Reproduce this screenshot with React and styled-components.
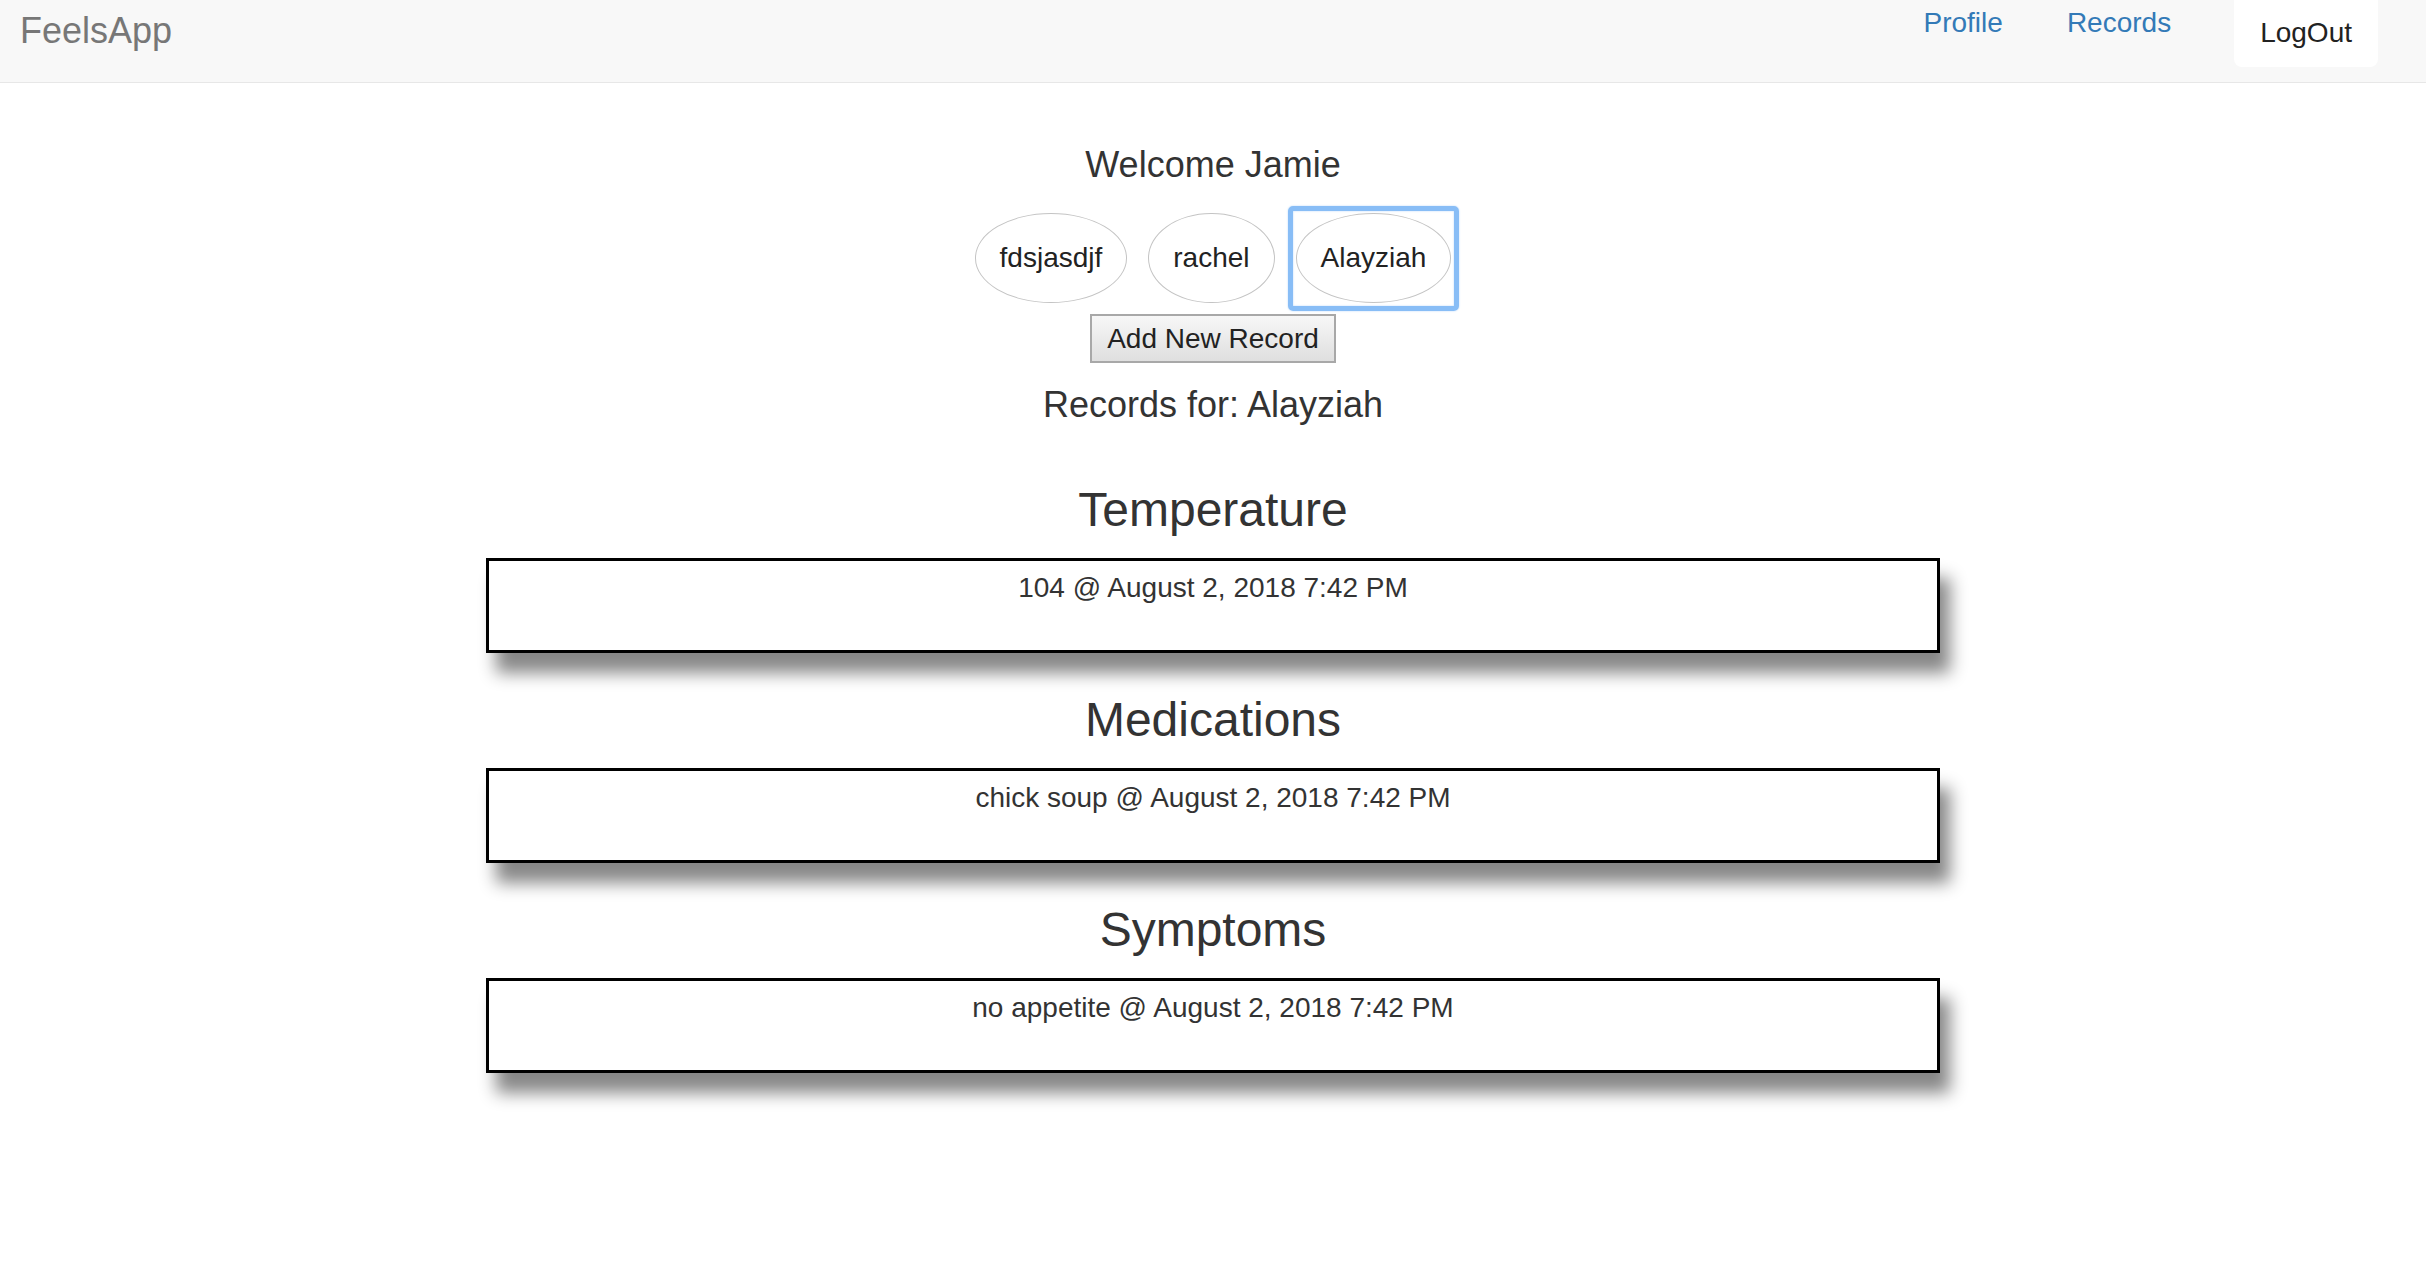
import React, { useState } from 'react';
import styled, { createGlobalStyle } from 'styled-components';

const GlobalStyle = createGlobalStyle`
  html, body {
    margin: 0;
    padding: 0;
    background: #ffffff;
  }
  body {
    font-family: 'Liberation Sans', Helvetica, Arial, sans-serif;
    font-size: 28px;
    line-height: 1.42857;
    color: #333333;
  }
  * {
    box-sizing: border-box;
  }
`;

const Navbar = styled.nav`
  display: flex;
  align-items: flex-start;
  height: 83px;
  background-color: #f8f8f8;
  border-bottom: 1px solid #e7e7e7;
`;

const Brand = styled.a`
  padding: 11px 0 0 20px;
  font-size: 36px;
  line-height: 40px;
  color: #777777;
  text-decoration: none;
`;

const NavLinks = styled.div`
  display: flex;
  align-items: flex-start;
  margin-left: auto;
  margin-right: 48px;
`;

const NavLink = styled.a`
  padding: 3px 32px 0;
  font-size: 28px;
  line-height: 40px;
  color: #337ab7;
  text-decoration: none;
  cursor: pointer;
`;

const LogOut = styled.a`
  margin-left: 31px;
  height: 67px;
  padding: 13px 26px 0;
  background: #ffffff;
  border-radius: 0 0 8px 8px;
  font-size: 28px;
  line-height: 40px;
  color: #222222;
  text-decoration: none;
  cursor: pointer;
`;

const Main = styled.main`
  display: flex;
  flex-direction: column;
  align-items: center;
  padding-bottom: 80px;
  text-align: center;
`;

const Welcome = styled.h4`
  margin: 62px 0 0;
  font-size: 36px;
  font-weight: 400;
  line-height: 1.1;
`;

const UserRow = styled.div`
  display: flex;
  gap: 21px;
  margin-top: 28px;
`;

const UserButton = styled.button`
  position: relative;
  padding: 24px;
  border: 1px solid #c4c4c4;
  border-radius: 50%;
  background: #ffffff;
  font-family: inherit;
  font-size: 28px;
  line-height: 40px;
  color: #222222;
  cursor: pointer;
  outline: none;

  &::before {
    content: '';
    display: ${p => (p.$selected ? 'block' : 'none')};
    position: absolute;
    top: -8px;
    left: -9px;
    right: -9px;
    bottom: -9px;
    border: 5px solid #88bdf6;
    border-radius: 5px;
    box-shadow: 0 0 2px #b5d6fa, inset 0 0 2px #b5d6fa;
    pointer-events: none;
  }
`;

const AddButton = styled.button`
  margin-top: 11px;
  padding: 6px 15px;
  border: 2px solid #a8a8a8;
  border-radius: 0;
  background: linear-gradient(#f7f7f7, #dfdfdf);
  font-family: inherit;
  font-size: 28px;
  line-height: 33px;
  color: #222222;
  cursor: pointer;
`;

const RecordsFor = styled.h4`
  margin: 22px 0 0;
  font-size: 36px;
  font-weight: 400;
  line-height: 1.1;
`;

const RecordList = styled.div`
  width: 100%;
  display: flex;
  flex-direction: column;
  align-items: center;
  margin-top: 19px;
`;

const SectionTitle = styled.h3`
  margin: 41px 0 21px;
  font-size: 48px;
  font-weight: 400;
  line-height: 1.1;
`;

const RecordBox = styled.div`
  width: 59.9%;
  padding: 7px 0 42px;
  border: 3px solid #000000;
  background: #ffffff;
  box-shadow: 10px 20px 16px #888888;
  font-size: 28px;
  line-height: 40px;
`;

const users = ['fdsjasdjf', 'rachel', 'Alayziah'];

const records = [
  { title: 'Temperature', entries: ['104 @ August 2, 2018 7:42 PM'] },
  { title: 'Medications', entries: ['chick soup @ August 2, 2018 7:42 PM'] },
  { title: 'Symptoms', entries: ['no appetite @ August 2, 2018 7:42 PM'] },
];

const App = () => {
  const [selected, setSelected] = useState('Alayziah');

  return (
    <>
      <GlobalStyle />
      <Navbar>
        <Brand>FeelsApp</Brand>
        <NavLinks>
          <NavLink>Profile</NavLink>
          <NavLink>Records</NavLink>
          <LogOut>LogOut</LogOut>
        </NavLinks>
      </Navbar>
      <Main>
        <Welcome>Welcome Jamie</Welcome>
        <UserRow>
          {users.map(u => (
            <UserButton key={u} $selected={u === selected} onClick={() => setSelected(u)}>
              {u}
            </UserButton>
          ))}
        </UserRow>
        <AddButton>Add New Record</AddButton>
        <RecordsFor>Records for: {selected}</RecordsFor>
        <RecordList>
          {records.map(r => (
            <React.Fragment key={r.title}>
              <SectionTitle>{r.title}</SectionTitle>
              <RecordBox>
                {r.entries.map(e => (
                  <div key={e}>{e}</div>
                ))}
              </RecordBox>
            </React.Fragment>
          ))}
        </RecordList>
      </Main>
    </>
  );
};

export default App;
